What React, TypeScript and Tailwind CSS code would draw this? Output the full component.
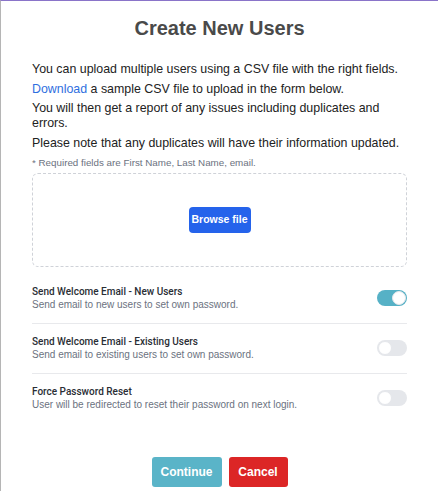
import { useState } from "react";

type ToggleRowProps = {
  title: string;
  description: string;
  on: boolean;
  onChange: () => void;
  last?: boolean;
};

function Toggle({ on, onChange }: { on: boolean; onChange: () => void }) {
  return (
    <button
      onClick={onChange}
      className={`relative w-[30px] h-[16px] rounded-full shrink-0 transition-colors ${
        on ? "bg-[#56b1c6]" : "bg-[#e5e7eb]"
      }`}
    >
      <span
        className={`absolute top-[1px] w-[14px] h-[14px] rounded-full bg-white border border-[#e5e7eb] transition-all ${
          on ? "left-[15px]" : "left-[1px]"
        }`}
      />
    </button>
  );
}

function ToggleRow({ title, description, on, onChange, last }: ToggleRowProps) {
  return (
    <div
      className={`flex items-center justify-between py-[11.5px] ${
        last ? "" : "border-b border-[#e8e9ec]"
      }`}
    >
      <div>
        <div
          className="text-[10px] leading-[13px] font-medium text-[#2a2e35]"
          style={{ fontFamily: "Roboto, 'Liberation Sans', sans-serif" }}
        >
          {title}
        </div>
        <div className="text-[10px] leading-[13px] text-[#6b7280]">{description}</div>
      </div>
      <Toggle on={on} onChange={onChange} />
    </div>
  );
}

export default function App() {
  const [newUsers, setNewUsers] = useState(true);
  const [existingUsers, setExistingUsers] = useState(false);
  const [forceReset, setForceReset] = useState(false);

  return (
    <div
      className="w-[438px] h-[491px] bg-white border-t border-t-[#8a74c9] border-l border-l-[#b5b5b5] flex flex-col"
      style={{ fontFamily: "'Liberation Sans', Arial, sans-serif" }}
    >
      <h1 className="text-center text-[20px] leading-[28px] font-bold text-[#4a4a4a] pt-[13px]">
        Create New Users
      </h1>

      <div className="px-[31px] pt-[20px] text-[12.4px] leading-[15px] text-[#222]">
        <p className="mb-[4.5px]">You can upload multiple users using a CSV file with the right fields.</p>
        <p className="mb-[4.5px]">
          <a href="#" className="text-[#2f6fe0]">Download</a> a sample CSV file to upload in the form below.
        </p>
        <p className="mb-[4.5px]">You will then get a report of any issues including duplicates and errors.</p>
        <p>Please note that any duplicates will have their information updated.</p>
        <p className="mt-[5px] text-[9.8px] leading-[13px] text-[#6b7280]">
          * Required fields are First Name, Last Name, email.
        </p>

        <div className="mt-[4px] h-[94px] border border-dashed border-[#cfd2d8] rounded-[6px] flex items-center justify-center">
          <button className="bg-[#2563eb] text-white text-[10.5px] font-bold rounded-[4px] w-[62px] h-[26px]">
            Browse file
          </button>
        </div>

        <div className="mt-[7px]">
          <ToggleRow
            title="Send Welcome Email - New Users"
            description="Send email to new users to set own password."
            on={newUsers}
            onChange={() => setNewUsers(!newUsers)}
          />
          <ToggleRow
            title="Send Welcome Email - Existing Users"
            description="Send email to existing users to set own password."
            on={existingUsers}
            onChange={() => setExistingUsers(!existingUsers)}
          />
          <ToggleRow
            title="Force Password Reset"
            description="User will be redirected to reset their password on next login."
            on={forceReset}
            onChange={() => setForceReset(!forceReset)}
            last
          />
        </div>
      </div>

      <div className="mt-auto mb-[4px] flex justify-center gap-[7px]">
        <button className="bg-[#5ab4c8] text-white text-[12px] font-semibold rounded-[3px] w-[70px] h-[30px]">
          Continue
        </button>
        <button className="bg-[#dc2626] text-white text-[12px] font-semibold rounded-[3px] w-[59px] h-[30px]">
          Cancel
        </button>
      </div>
    </div>
  );
}
